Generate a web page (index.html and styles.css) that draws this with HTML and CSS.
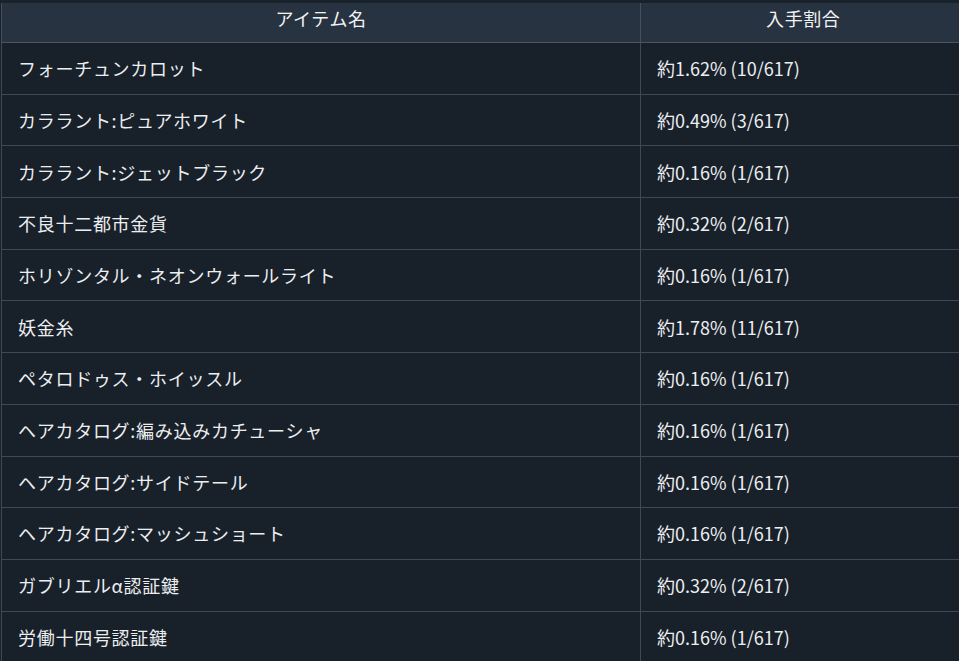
FILE: index.html
```html
<!DOCTYPE html>
<html lang="ja">
<head>
<meta charset="utf-8">
<link rel="stylesheet" href="styles.css">
</head>
<body>
<div class="wrap">
<table class="drops">
<colgroup><col class="c-name"><col class="c-rate"></colgroup>
<thead>
<tr><th class="name">アイテム名</th><th>入手割合</th></tr>
</thead>
<tbody>
<tr><td class="name">フォーチュンカロット</td><td>約1.62% (10/617)</td></tr>
<tr><td class="name">カララント:ピュアホワイト</td><td>約0.49% (3/617)</td></tr>
<tr><td class="name">カララント:ジェットブラック</td><td>約0.16% (1/617)</td></tr>
<tr><td class="name">不良十二都市金貨</td><td>約0.32% (2/617)</td></tr>
<tr><td class="name">ホリゾンタル・ネオンウォールライト</td><td>約0.16% (1/617)</td></tr>
<tr><td class="name">妖金糸</td><td>約1.78% (11/617)</td></tr>
<tr><td class="name">ペタロドゥス・ホイッスル</td><td>約0.16% (1/617)</td></tr>
<tr><td class="name">ヘアカタログ:編み込みカチューシャ</td><td>約0.16% (1/617)</td></tr>
<tr><td class="name">ヘアカタログ:サイドテール</td><td>約0.16% (1/617)</td></tr>
<tr><td class="name">ヘアカタログ:マッシュショート</td><td>約0.16% (1/617)</td></tr>
<tr><td class="name">ガブリエルα認証鍵</td><td>約0.32% (2/617)</td></tr>
<tr><td class="name">労働十四号認証鍵</td><td>約0.16% (1/617)</td></tr>
</tbody>
</table>
</div>
</body>
</html>
```
FILE: styles.css
```css
html, body {
  margin: 0;
  padding: 0;
  background: #19212a;
  overflow: hidden;
}
.wrap {
  padding: 3px 0 0 1px;
  width: 958px;
  overflow: hidden;
}
.drops {
  border-collapse: collapse;
  table-layout: fixed;
  width: 964px;
  font-family: "Noto Sans CJK JP", "Noto Sans", sans-serif;
  font-size: 18px;
  color: #eceef0;
}
.c-name { width: 639px; }
.c-rate { width: 325px; }
.drops th {
  background: #283341;
  font-weight: normal;
  text-align: center;
  line-height: 26px;
  padding: 2px 16px 11px;
  border-left: 1px solid #44505d;
  border-bottom: 1px solid #4b5663;
  color: #f0f2f4;
  letter-spacing: 0.6px;
}
.drops td {
  background: #18202a;
  text-align: left;
  line-height: 26.1px;
  padding: 12.3px 16px 12.3px 16px;
  border-left: 1px solid #3d4956;
  border-bottom: 1px solid #3d4956;
}
.drops td.name {
  letter-spacing: 0.72px;
}
```
